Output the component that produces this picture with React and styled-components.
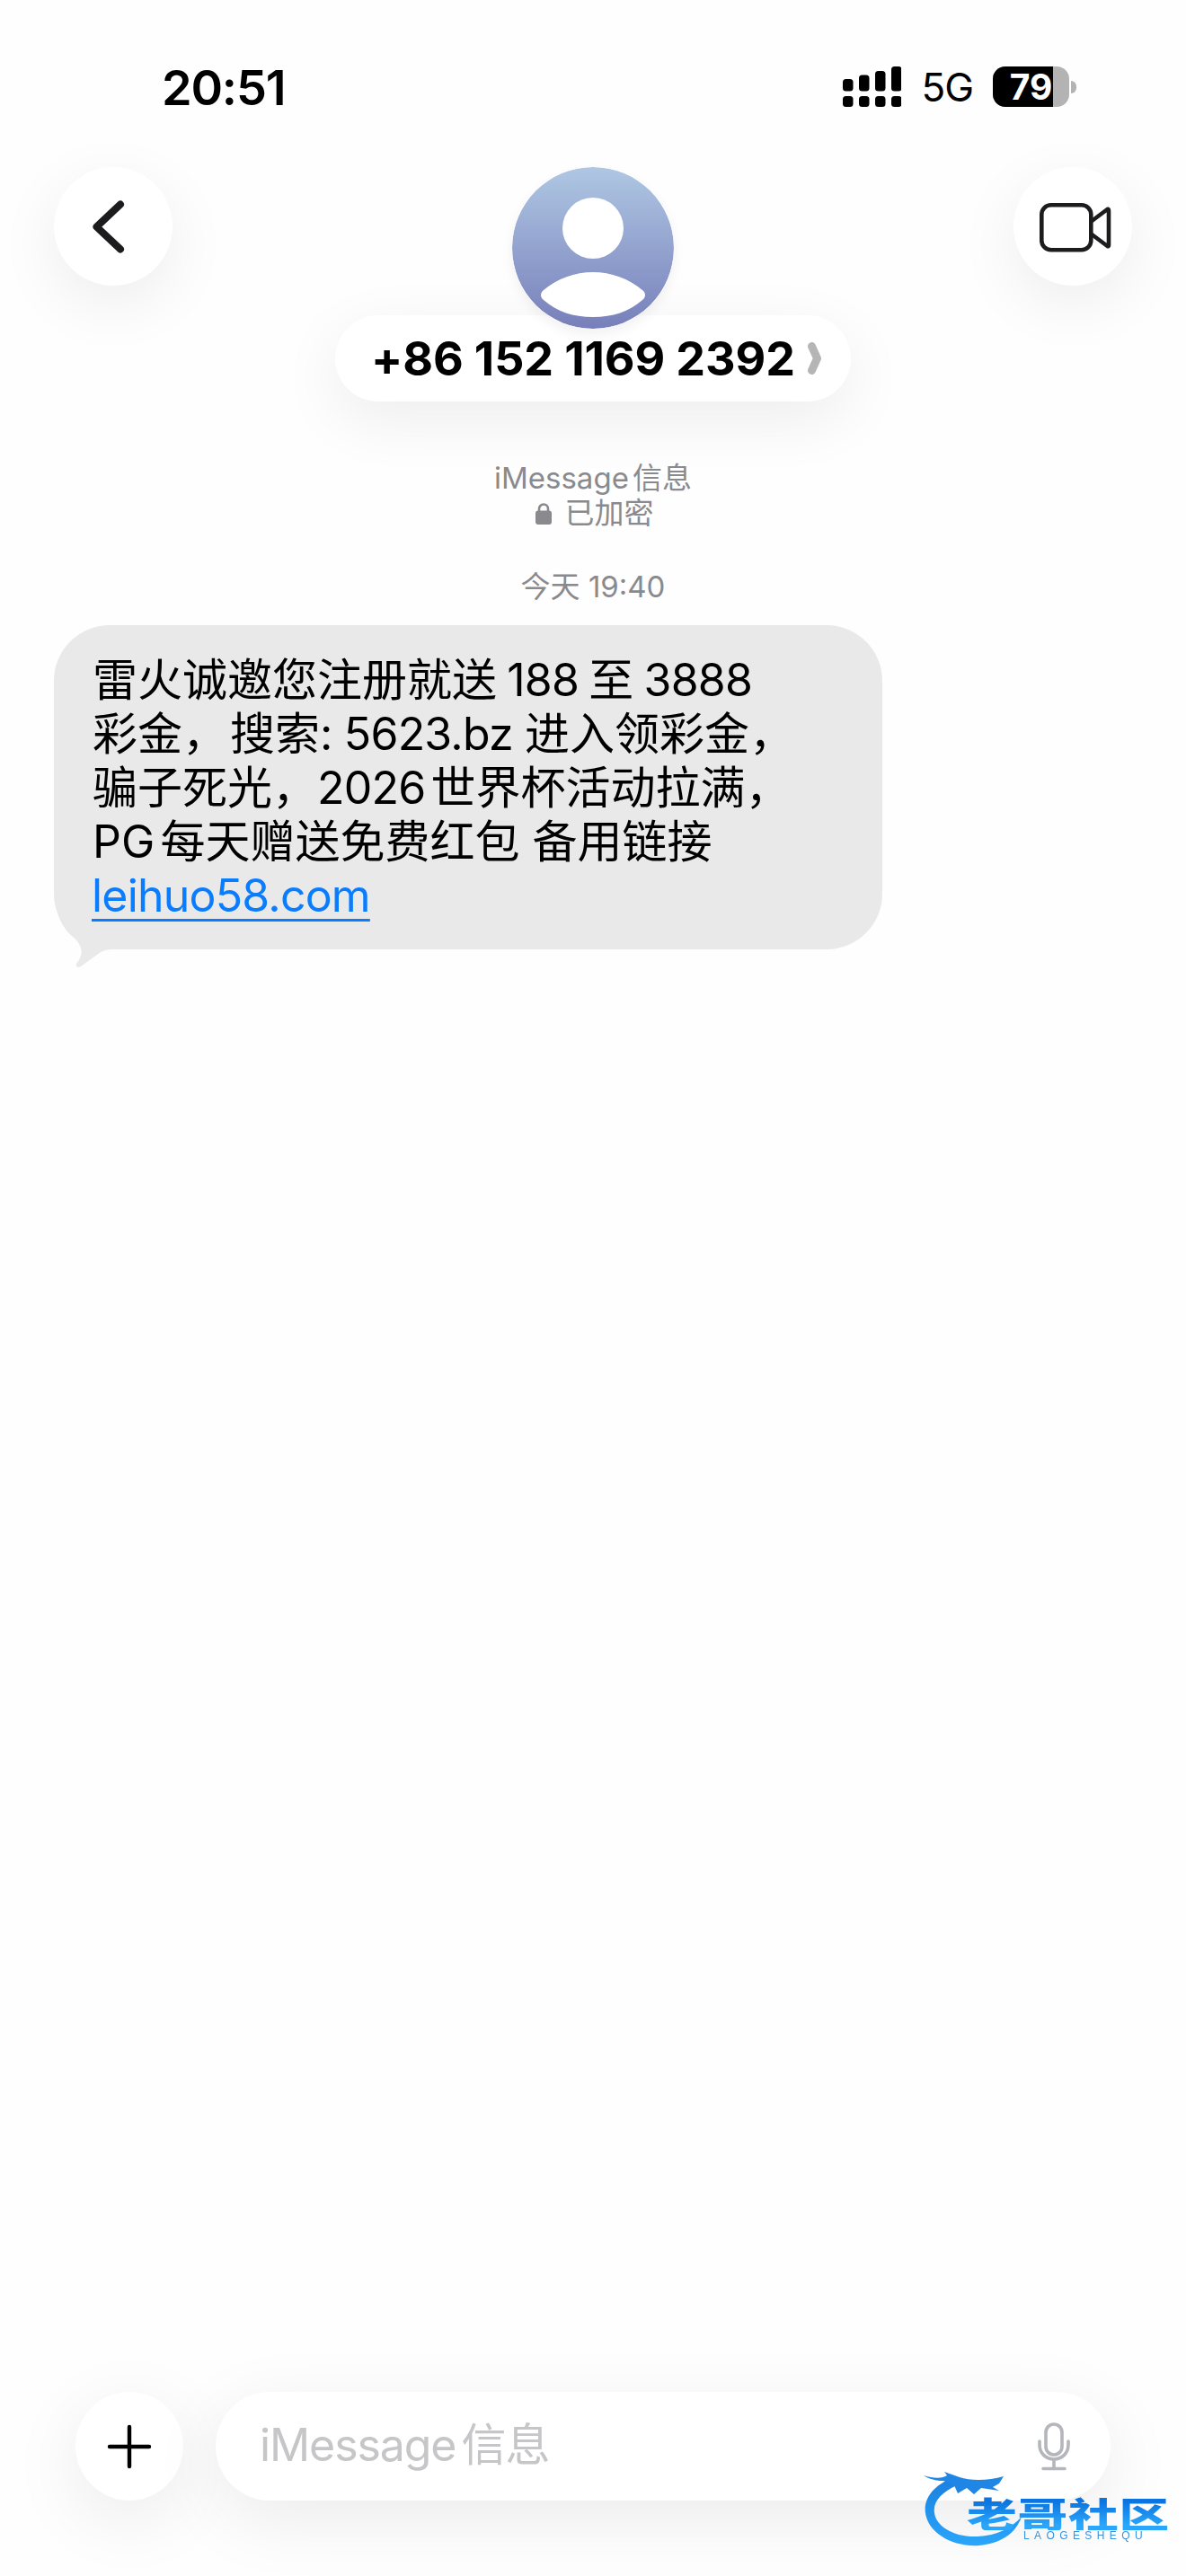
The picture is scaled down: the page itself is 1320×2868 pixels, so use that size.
import React from "react";
import styled, { createGlobalStyle } from "styled-components";

const Global = createGlobalStyle`
  html, body { margin: 0; padding: 0; background: #fff; }
  body { font-family: Inter, "Noto Sans CJK SC", sans-serif; -webkit-font-smoothing: antialiased; }
`;

const Page = styled.div`
  position: relative;
  width: 1320px;
  height: 2868px;
  overflow: hidden;
  display: flex;
  flex-direction: column;
  background: #fefefe;
`;

const StatusBar = styled.div`
  height: 186px;
  box-sizing: border-box;
  padding: 69px 122px 0 180px;
  display: flex;
  justify-content: space-between;
  align-items: flex-start;
`;
const Clock = styled.div`
  font-size: 54px;
  line-height: 57px;
  font-weight: 600;
  letter-spacing: -1.2px;
  color: #000;
`;
const StatusIcons = styled.div`
  display: flex;
  align-items: center;
  height: 45px;
  margin-top: 5px;
`;
const Network = styled.span`
  font-size: 44px;
  line-height: 45px;
  margin: 0 22px 0 22px;
  color: #000;
  letter-spacing: -1px;
  position: relative;
  top: 1px;
`;
const Battery = styled.div`
  position: relative;
  width: 85px;
  height: 45px;
  border-radius: 14px;
  background: #b3b3b3;
  overflow: hidden;
`;
const BatteryFill = styled.div`
  height: 100%;
  background: #000;
`;
const BatteryText = styled.span`
  position: absolute;
  inset: 0;
  display: flex;
  align-items: center;
  justify-content: center;
  font-size: 39px;
  font-weight: 700;
  color: #fff;
`;
const BatteryNub = styled.div`
  width: 6px;
  height: 14px;
  margin-left: 2px;
  border-radius: 0 7px 7px 0;
  background: #b3b3b3;
`;

const Header = styled.div`
  display: flex;
  justify-content: space-between;
  align-items: flex-start;
  padding: 0 60px;
`;
const RoundButton = styled.div`
  width: 132px;
  height: 132px;
  border-radius: 50%;
  background: #fff;
  display: flex;
  align-items: center;
  justify-content: center;
  box-shadow: 0 20px 70px rgba(0, 0, 0, 0.07);
`;
const Contact = styled.div`
  display: flex;
  flex-direction: column;
  align-items: center;
`;
const Avatar = styled.svg`
  width: 180px;
  height: 180px;
  display: block;
  position: relative;
  z-index: 2;
  margin-bottom: -15px;
  border-radius: 50%;
  box-shadow: 0 6px 14px rgba(0, 0, 0, 0.06);
`;
const NamePill = styled.div`
  width: 574px;
  height: 96px;
  box-sizing: border-box;
  padding: 0 33px 0 40px;
  border-radius: 48px;
  background: #fff;
  display: flex;
  align-items: center;
  justify-content: space-between;
  box-shadow: 0 20px 70px rgba(0, 0, 0, 0.07);
`;
const Phone = styled.span`
  font-size: 52px;
  font-weight: 700;
  letter-spacing: -0.1px;
  color: #000;
  white-space: nowrap;
`;

const Info = styled.div`
  margin-top: 66px;
  display: flex;
  flex-direction: column;
  align-items: center;
  font-size: 33px;
  line-height: 39px;
  color: #8a8a8e;
`;
const InfoRow = styled.div`
  display: flex;
  align-items: center;
  gap: 15px;
  text-autospace: normal;
`;
const LockRow = styled(InfoRow)`
  padding-left: 3px;
`;
const Stamp = styled.div`
  margin-top: 42px;
  text-align: center;
  font-size: 33px;
  line-height: 40px;
  color: #8a8a8e;
`;

const Bubble = styled.div`
  position: relative;
  isolation: isolate;
  margin: 23px 0 0 60px;
  width: 922px;
  box-sizing: border-box;
  padding: 31px 43px 30px;
  border-radius: 62px;
  background: #e9e9e9;
  font-size: 50px;
  line-height: 60px;
  color: #000;
  text-autospace: normal;
  white-space: nowrap;
`;
const Tail = styled.svg`
  position: absolute;
  z-index: -1;
  left: 0;
  bottom: -20px;
  width: 70px;
  height: 67px;
`;
const ThinGap = styled.span`
  display: inline-block;
  width: 3px;
`;
const Latin = styled.span`
  letter-spacing: -0.8px;
  margin-inline: ${(p) => (p.$pad ? "5px" : "0")};
`;
const Link = styled.span`
  color: #0a7dff;
  margin-left: -1px;
  letter-spacing: -0.8px;
  text-decoration: underline;
  text-decoration-thickness: 3px;
  text-underline-offset: 8px;
`;

const Compose = styled.div`
  margin-top: auto;
  padding: 0 84px 84px;
  display: flex;
  align-items: center;
  gap: 36px;
`;
const PlusButton = styled.div`
  width: 120px;
  height: 121px;
  flex: none;
  border-radius: 50%;
  background: #fff;
  display: flex;
  align-items: center;
  justify-content: center;
  box-shadow: 0 20px 80px rgba(0, 0, 0, 0.08);
`;
const InputBar = styled.div`
  flex: 1;
  height: 121px;
  box-sizing: border-box;
  padding: 0 45px 0 49px;
  border-radius: 61px;
  background: #fff;
  display: flex;
  align-items: center;
  justify-content: space-between;
  box-shadow: 0 20px 80px rgba(0, 0, 0, 0.08);
`;
const Placeholder = styled.span`
  font-size: 50px;
  line-height: 60px;
  margin-bottom: 3px;
  color: #c6c6c8;
  text-autospace: normal;
  letter-spacing: -1.1px;
`;

const Watermark = styled.div`
  position: absolute;
  left: 1020px;
  top: 2740px;
  width: 290px;
  height: 105px;
  filter: blur(0.7px);
`;
const Dragon = styled.svg`
  position: absolute;
  left: 0;
  top: 0;
  width: 130px;
  height: 105px;
`;
const MarkTitle = styled.div`
  position: absolute;
  left: 56px;
  top: 37px;
  font-family: "Noto Sans CJK SC", sans-serif;
  font-weight: 900;
  font-size: 39px;
  line-height: 40px;
  letter-spacing: 0.5px;
  white-space: nowrap;
  transform: scaleX(1.43);
  transform-origin: left center;
  background: linear-gradient(180deg, #0b74e0 20%, #2aa6fa 85%);
  -webkit-background-clip: text;
  background-clip: text;
  color: transparent;
`;
const MarkSub = styled.div`
  position: absolute;
  left: 119px;
  top: 77px;
  font-family: "Liberation Sans", sans-serif;
  font-size: 12px;
  line-height: 12px;
  letter-spacing: 5.4px;
  color: #3c92dc;
  white-space: nowrap;
`;

const batteryLevel = 79;

export default function App() {
  return (
    <Page>
      <Global />
      <StatusBar>
        <Clock>20:51</Clock>
        <StatusIcons>
          <svg width="65" height="45" viewBox="0 0 65 45" fill="#000">
            <rect x="0" y="33" width="11.5" height="12" rx="3.5" />
            <rect x="18" y="33" width="11.5" height="12" rx="3.5" />
            <rect x="36" y="33" width="11.5" height="12" rx="3.5" />
            <rect x="54" y="33" width="11.5" height="12" rx="3.5" />
            <rect x="0" y="14" width="11.5" height="13.5" rx="3.5" />
            <rect x="18" y="9.5" width="11.5" height="18" rx="3.5" />
            <rect x="36" y="5" width="11.5" height="22.5" rx="3.5" />
            <rect x="54" y="0" width="11.5" height="27.5" rx="3.5" />
          </svg>
          <Network>5G</Network>
          <Battery>
            <BatteryFill style={{ width: `${batteryLevel}%` }} />
            <BatteryText>{batteryLevel}</BatteryText>
          </Battery>
          <BatteryNub />
        </StatusIcons>
      </StatusBar>

      <Header>
        <RoundButton>
          <svg width="132" height="132" viewBox="0 0 132 132" fill="none">
            <path d="M74 42 L47.5 67 L74 92" transform="translate(0 -0.5)" stroke="#1c1c1e" strokeWidth="8" strokeLinecap="round" strokeLinejoin="round" />
          </svg>
        </RoundButton>
        <Contact>
          <Avatar viewBox="0 0 180 180">
            <defs>
              <linearGradient id="av" x1="0" y1="0" x2="0" y2="1">
                <stop offset="0" stopColor="#afc7e3" />
                <stop offset="1" stopColor="#777fba" />
              </linearGradient>
            </defs>
            <circle cx="90" cy="90" r="90" fill="url(#av)" />
            <circle cx="90" cy="68" r="34" fill="#fff" />
            <path d="M35 137C50 124 70 117 90 117C110 117 130 124 145 137C149 140 149 145 145 148C130 161 112 167 90 167C68 167 50 161 35 148C31 145 31 140 35 137Z" fill="#fff" />
          </Avatar>
          <NamePill>
            <Phone>+86 152 1169 2392</Phone>
            <svg width="15" height="36" viewBox="0 0 15 36" fill="none">
              <path d="M4.5 4.5 L10.5 18 L4.5 31.5" stroke="#b5b5b5" strokeWidth="9" strokeLinecap="round" strokeLinejoin="round" />
            </svg>
          </NamePill>
        </Contact>
        <RoundButton>
          <svg width="132" height="132" viewBox="0 0 132 132" fill="none" stroke="#1c1c1e" strokeWidth="4.6" strokeLinejoin="round">
            <rect x="31.3" y="42.3" width="55" height="50" rx="10.5" />
            <path d="M86.5 60.5 L104.5 47 Q106 46.5 106 48.5 V87 Q106 88.5 104.5 88 L86.5 74.5" />
          </svg>
        </RoundButton>
      </Header>

      <Info>
        <InfoRow>iMessage信息</InfoRow>
        <LockRow>
          <svg width="18" height="25" viewBox="0 0 18 25" fill="#8a8a8e">
            <path d="M4 11V7.5a5 5 0 0 1 10 0V11" fill="none" stroke="#8a8a8e" strokeWidth="2.6" />
            <rect x="0" y="9.5" width="18" height="15.5" rx="3" />
          </svg>
          已加密
        </LockRow>
      </Info>
      <Stamp>今天 19:40</Stamp>

      <Bubble>
        <Tail viewBox="0 0 70 67" fill="#e9e9e9">
          <path d="M3 0C5 8 6 14 10 20C13 25 16 29 20 32C32 42 34 52 25 63C24 66 27 68 30 66L52 50C56 47.5 62 47 70 47V0Z" />
        </Tail>
        雷火诚邀您注册就送<Latin $pad>188</Latin>至<Latin $pad>3888</Latin>
        <br />
        彩金，<ThinGap />搜索<Latin>: 5623.bz </Latin>进入领彩金，
        <br />
        骗子死光，<Latin>2026</Latin>世界杯活动拉满，
        <br />
        PG每天赠送免费红包 备用链接
        <br />
        <Link>leihuo58.com</Link>
      </Bubble>

      <Compose>
        <PlusButton>
          <svg width="50" height="50" viewBox="0 0 50 50" fill="none" stroke="#000" strokeWidth="4.4" strokeLinecap="round">
            <path d="M25 3V47M3 25H47" />
          </svg>
        </PlusButton>
        <InputBar>
          <Placeholder>iMessage信息</Placeholder>
          <svg width="36" height="54" viewBox="0 0 36 54" fill="none" stroke="#b4b6bc" strokeWidth="3.6" strokeLinecap="round">
            <rect x="9" y="2" width="18" height="34" rx="9" />
            <path d="M2 21V25C2 34 9 41 18 41C27 41 34 34 34 25V21" />
            <path d="M18 41V51.5M6 51.5H30" />
          </svg>
        </InputBar>
      </Compose>

      <Watermark>
        <Dragon viewBox="0 0 130 105">
          <defs>
            <linearGradient id="dr" x1="0" y1="0" x2="0" y2="1">
              <stop offset="0" stopColor="#1b80e0" />
              <stop offset="1" stopColor="#2aa6fa" />
            </linearGradient>
          </defs>
          <path d="M37 20C15 30 8 45 10 58C13 80 40 96 70 94C92 92 110 82 117 62C105 75 90 83 68 84C40 85 22 72 20 58C18 45 28 35 45 27Z" fill="url(#dr)" />
          <path d="M8 16C20 20 30 19 34 16L31 12L48 18C60 22 80 22 97 17L92 25L85 29L92 33L72 30L64 37L56 30L46 36L42 27L30 22C22 22 14 20 8 16Z" fill="#1f86e6" />
        </Dragon>
        <MarkTitle>老哥社区</MarkTitle>
        <MarkSub>LAOGESHEQU</MarkSub>
      </Watermark>
    </Page>
  );
}
